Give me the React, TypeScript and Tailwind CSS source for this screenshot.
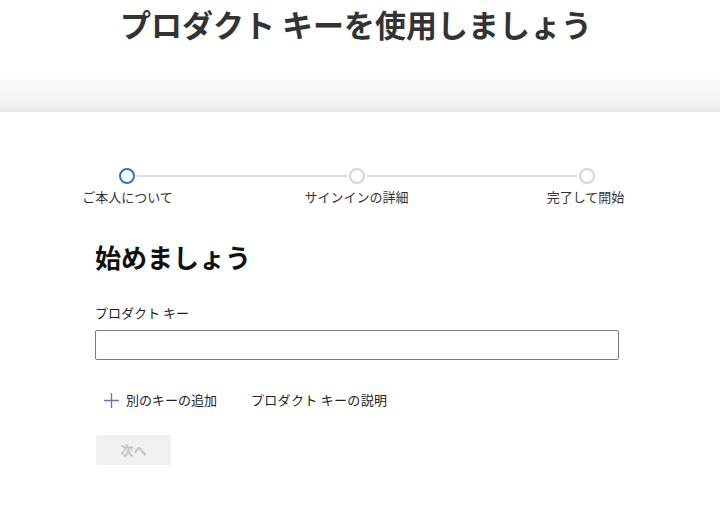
import React from "react";

const steps = ["ご本人について", "サインインの詳細", "完了して開始"];

function Stepper() {
    return (
        <div className="grid grid-cols-3 w-[687px] ml-[13px]">
            {steps.map((label, i) => (
                <div key={label} className="flex flex-col items-center">
                    <div className="flex items-center w-full h-[16px]">
                        <div className={i === 0 ? "flex-1" : "flex-1 h-[2px] bg-[#dcdcdc] mr-[2px]"}></div>
                        <div
                            className={
                                i === 0
                                    ? "w-[16px] h-[16px] rounded-full border-2 border-[#2a74d5] bg-white"
                                    : "w-[16px] h-[16px] rounded-full border-2 border-[#d6d6d6] bg-white"
                            }
                        ></div>
                        <div className={i === 2 ? "flex-1" : "flex-1 h-[2px] bg-[#dcdcdc] ml-[2px]"}></div>
                    </div>
                    <span className="mt-[4px] text-[13px] leading-[18px] text-[#333]">{label}</span>
                </div>
            ))}
        </div>
    );
}

export default function App() {
    return (
        <div
            className="w-full h-[522px] bg-white overflow-hidden"
            style={{ fontFamily: '"Noto Sans CJK JP", "Noto Sans", sans-serif' }}
        >
            <header className="h-[112px] w-full bg-[linear-gradient(to_bottom,#ffffff_64%,#f3f3f3_92%,#e6e6e6)]">
                <div className="w-[712px] flex justify-center">
                    <h1 className="mt-[3px] text-[31px] leading-[42px] font-bold text-[#333]">
                        プロダクト キーを使用しましょう
                    </h1>
                </div>
            </header>
            <main className="pt-[56px]">
                <Stepper />
                <section className="ml-[95px] w-[524px] mt-[34px]">
                    <h2 className="text-[26px] leading-[34px] font-bold text-[#111]">始めましょう</h2>
                    <label className="block mt-[30px] text-[13px] leading-[18px] font-normal text-[#222]">
                        プロダクト キー
                    </label>
                    <input
                        type="text"
                        className="mt-[8px] block w-[524px] h-[30px] border border-[#7a7a7a] rounded-[2px] px-2 text-[13px] outline-none"
                    />
                    <div className="flex items-center mt-[30px] h-[20px] text-[13px] text-[#222]">
                        <button className="flex items-center">
                            <svg className="ml-[9px] w-[15px] h-[15px]" viewBox="0 0 15 15" fill="none">
                                <path d="M7.5 0v15M0 7.5h15" stroke="#5b79b5" strokeWidth="1.3" />
                            </svg>
                            <span className="ml-[7px]">別のキーの追加</span>
                        </button>
                        <button className="ml-[34px] tracking-[0.3px]">プロダクト キーの説明</button>
                    </div>
                    <button className="mt-[25px] ml-[1px] w-[75px] h-[30px] bg-[#f1f1f1] rounded-[2px] text-[13px] font-bold text-[#c2c2c2]">
                        次へ
                    </button>
                </section>
            </main>
        </div>
    );
}
